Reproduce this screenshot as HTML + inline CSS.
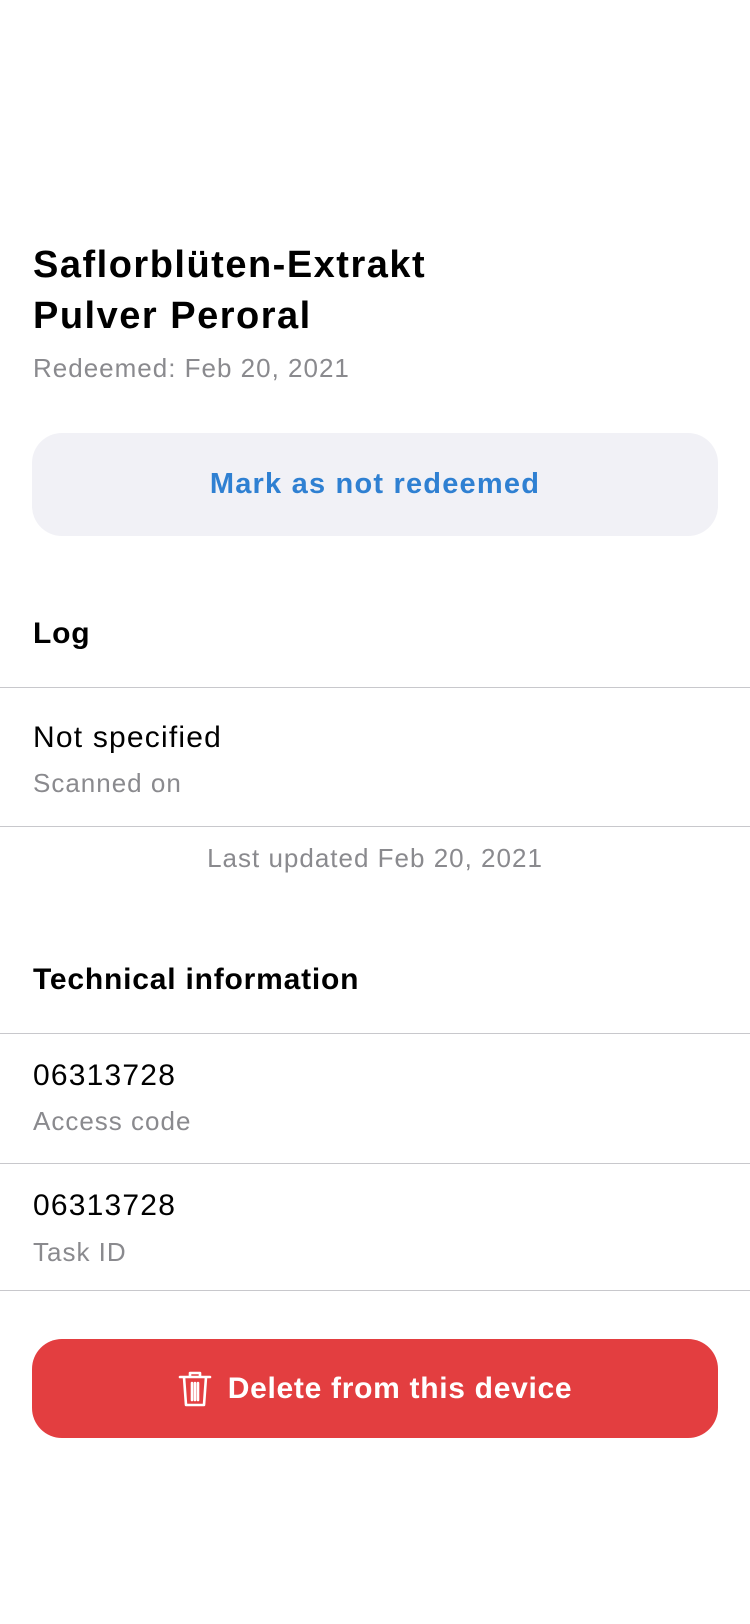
<!DOCTYPE html>
<html><head><meta charset="utf-8"><style>
*{margin:0;padding:0;box-sizing:border-box}
body{width:750px;height:1624px;background:#fff;font-family:"Liberation Sans",sans-serif;position:relative;overflow:hidden;color:#000}
.a{position:absolute;white-space:nowrap}
.g{color:#8a8a8e;font-size:26px;letter-spacing:1px}
.t{font-size:30px;letter-spacing:1.2px}
.h{font-size:30px;font-weight:bold;letter-spacing:0.8px}
.line{position:absolute;left:0;width:750px;height:1px;background:#c8c8cc}
</style></head><body>
<div class="a" style="left:33px;top:240px;font-size:38px;font-weight:bold;line-height:51px;letter-spacing:1.5px">Saflorblüten-Extrakt<br>Pulver Peroral</div>
<div class="a g" style="left:33px;top:353px">Redeemed: Feb 20, 2021</div>
<div class="a" style="left:32px;top:433px;width:686px;height:103px;background:#f1f1f6;border-radius:30px;display:flex;align-items:center;justify-content:center;color:#2f80d2;font-size:29px;font-weight:bold;letter-spacing:1.2px">Mark as not redeemed</div>
<div class="a h" style="left:33px;top:617px">Log</div>
<div class="line" style="top:687px"></div>
<div class="a t" style="left:33px;top:721px">Not specified</div>
<div class="a g" style="left:33px;top:768px">Scanned on</div>
<div class="line" style="top:826px"></div>
<div class="a g" style="left:0;width:750px;text-align:center;top:843px">Last updated Feb 20, 2021</div>
<div class="a h" style="left:33px;top:963px">Technical information</div>
<div class="line" style="top:1033px"></div>
<div class="a t" style="left:33px;top:1059px">06313728</div>
<div class="a g" style="left:33px;top:1106px">Access code</div>
<div class="line" style="top:1163px"></div>
<div class="a t" style="left:33px;top:1189px">06313728</div>
<div class="a g" style="left:33px;top:1237px">Task ID</div>
<div class="line" style="top:1290px"></div>
<div class="a" style="left:32px;top:1339px;width:686px;height:99px;background:#e33e40;border-radius:30px;display:flex;align-items:center;justify-content:center;color:#fff;font-size:30px;font-weight:bold;letter-spacing:0.7px">
<svg width="34" height="38" viewBox="0 0 34 38" style="margin-right:16px" fill="none" stroke="#fff" stroke-width="2.6" stroke-linecap="round" stroke-linejoin="round"><path d="M2 7h30M12 7V3h10v4M6 7l2 28h18l2-28M14 13v17M17 13v17M20 13v17"/></svg>Delete from this device</div>
</body></html>
